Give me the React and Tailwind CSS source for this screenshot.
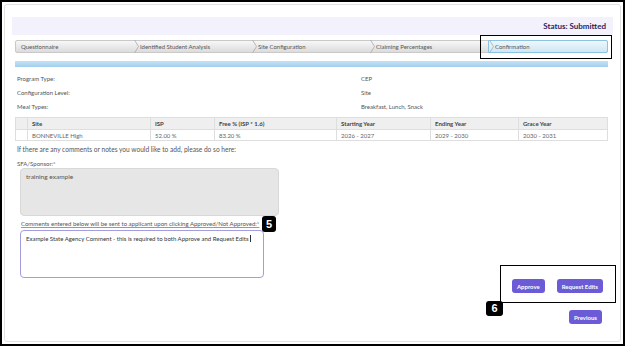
import React from 'react';

const font = { fontFamily: 'Lato, "Open Sans", sans-serif' };

const steps = ['Questionnaire', 'Identified Student Analysis', 'Site Configuration', 'Claiming Percentages', 'Confirmation'];

const Chevron = () => (
  <svg width="5" height="13" viewBox="0 0 5 13" className="shrink-0">
    <polyline points="0.5,0 4.5,6.5 0.5,13" fill="none" stroke="#a9a9a9" strokeWidth="0.8" />
  </svg>
);

const StepBar = () => (
  <div className="relative mt-[5px] flex h-[13px] rounded-[2px] border border-[#c9c9c9] bg-gradient-to-b from-[#f7f7f7] to-[#dcdcdc]">
    {steps.map((s, i) => {
      const last = i === steps.length - 1;
      return (
        <div
          key={s}
          className={
            'flex flex-1 items-center ' +
            (last ? 'rounded-r-[2px] border border-[#8cc3e2] bg-gradient-to-b from-[#eef7fc] to-[#cfe7f4] -my-[1px] -mr-[1px]' : '')
          }
        >
          {i > 0 && <Chevron />}
          <span className={'text-[6px] text-[#555] ' + (i > 0 ? 'pl-[1px]' : 'pl-[5px]')}>{s}</span>
        </div>
      );
    })}
    {/* highlight box */}
    <div className="absolute -top-[6px] -right-[5px] h-[24px] w-[132px] border-[1.5px] border-black" />
  </div>
);

const InfoRow = ({ label, value }) => (
  <div className="flex h-[14px] items-center text-[6px] text-[#555]">
    <span className="w-[346px] pl-[2px]">{label}</span>
    <span>{value}</span>
  </div>
);

const cols = [
  { w: 'w-[11px]', h: '', v: '' },
  { w: 'w-[123px]', h: 'Site', v: 'BONNEVILLE High' },
  { w: 'w-[64px]', h: 'ISP', v: '52.00 %' },
  { w: 'w-[122px]', h: 'Free % (ISP * 1.6)', v: '83.20 %' },
  { w: 'w-[94px]', h: 'Starting Year', v: '2026 - 2027' },
  { w: 'w-[88px]', h: 'Ending Year', v: '2029 - 2030' },
  { w: 'flex-1', h: 'Grace Year', v: '2030 - 2031' },
];

const SiteTable = () => (
  <div className="mt-[4px] border border-[#dedede] text-[6px]">
    <div className="flex h-[11px] bg-[#efefef] font-bold text-[#444]">
      {cols.map((c, i) => (
        <div key={i} className={c.w + ' flex items-center pl-[4px] ' + (i > 0 ? 'border-l border-[#dedede]' : '')}>{c.h}</div>
      ))}
    </div>
    <div className="flex h-[11px] border-t border-[#dedede] text-[#666]">
      {cols.map((c, i) => (
        <div key={i} className={c.w + ' flex items-center pl-[4px] ' + (i > 0 ? 'border-l border-[#dedede]' : '')}>{c.v}</div>
      ))}
    </div>
  </div>
);

const Badge = ({ n, className }) => (
  <div className={'absolute flex items-center justify-center rounded-[3px] bg-black text-[11px] font-bold text-white ' + className} style={{ fontFamily: 'Arial, sans-serif' }}>
    {n}
  </div>
);

const Btn = ({ children }) => (
  <button className="h-[14px] rounded-[3px] bg-[#6b5bd6] px-[5px] text-[6px] font-bold text-white">{children}</button>
);

export default function App() {
  return (
    <div className="h-[346px] w-[625px] overflow-hidden border-2 border-black bg-white p-[2px]" style={font}>
      <div className="h-full rounded-[3px] border border-[#e2e2e2] px-[7px] pt-[12px]">
        <div className="flex h-[18px] items-center justify-end bg-[#f3f1fb] pr-[7px]">
          <span className="text-[8px] font-bold text-[#2a2760]">Status: Submitted</span>
        </div>
        <div className="pl-[3px] pr-[5px]">
          <StepBar />
          <div className="mt-[8px] h-[6px] bg-gradient-to-b from-[#c4e2f6] to-[#a3cfec]" />
          <div className="mt-[4px]">
            <InfoRow label="Program Type:" value="CEP" />
            <InfoRow label="Configuration Level:" value="Site" />
            <InfoRow label="Meal Types:" value="Breakfast, Lunch, Snack" />
          </div>
          <SiteTable />
          <div className="mt-[4px] flex h-[10px] items-center pl-[2px] text-[6.6px] text-[#555]">
            If there are any comments or notes you would like to add, please do so here:
          </div>
          <div className="mt-[3px] flex h-[10px] items-center pl-[2px] text-[6px] text-[#555]">SFA/Sponsor:*</div>
          <div className="ml-[5px] h-[48px] w-[259px] rounded-[4px] border border-[#d8d8d8] bg-[#e6e6e6] px-[5px] pt-[3px] text-[6.5px] text-[#555]">
            training example
          </div>
          <div className="relative mt-[2px] ml-[6px] flex h-[11px] w-[243px] items-center text-[6px] text-[#555] underline decoration-[#999]">
            Comments entered below will be sent to applicant upon clicking Approved/Not Approved:*
            <Badge n="5" className="-right-[12px] top-[-2px] h-[16px] w-[14px]" />
          </div>
          <div className="mt-[1px] ml-[5px] h-[48px] w-[244px] rounded-[4px] border border-[#a39ddf] px-[5px] pt-[3px] text-[6px] text-[#333]">
            Example State Agency Comment - this is required to both Approve and Request Edits
            <span className="ml-[1px] inline-block h-[7px] w-[0.6px] translate-y-[1px] bg-[#333]" />
          </div>
          <div className="relative mt-[1px] flex justify-end gap-[12px] pr-[5px]">
            <Btn>Approve</Btn>
            <Btn>Request Edits</Btn>
            <div className="absolute -top-[14px] right-[-8px] h-[38px] w-[116px] border-[1.5px] border-black" />
            <Badge n="6" className="top-[22px] right-[105px] h-[15px] w-[17px]" />
          </div>
          <div className="mt-[17px] flex justify-end pr-[6px]">
            <Btn>Previous</Btn>
          </div>
        </div>
      </div>
    </div>
  );
}
